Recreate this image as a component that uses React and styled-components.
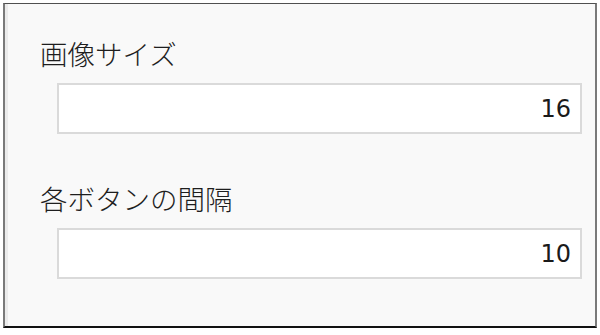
import React from 'react';
import styled, { createGlobalStyle } from 'styled-components';

const GlobalStyle = createGlobalStyle`
  html, body {
    margin: 0;
    padding: 0;
    background: #ffffff;
  }
`;

const Frame = styled.div`
  box-sizing: border-box;
  margin: 3px 0 0 3px;
  width: 594px;
  height: 325px;
  border-top: 1px solid #505050;
  border-left: 2px solid #7a7a7a;
  border-right: 2px solid #7a7a7a;
  border-bottom: 2px solid #111111;
  background: #f9f9f9;
  box-shadow: inset 3px 0 0 #ebebeb;
  padding: 35px 13px 0 35px;
  display: flex;
  flex-direction: column;
  gap: 50px;
`;

const Field = styled.div`
  display: flex;
  flex-direction: column;
  gap: 16px;
`;

const Label = styled.div`
  font-family: "Noto Sans CJK JP", "Noto Sans", sans-serif;
  font-size: 27.5px;
  font-weight: 300;
  line-height: 28px;
  color: #1e1e1e;
`;

const NumberBox = styled.input`
  box-sizing: border-box;
  margin-left: 17px;
  height: 51px;
  border: 2px solid #dadada;
  background: #ffffff;
  padding: 0 9px 0 8px;
  text-align: right;
  font-family: "DejaVu Sans", sans-serif;
  font-size: 24px;
  font-weight: 400;
  color: #1a1a1a;
  outline: none;
`;

export default function App() {
  return (
    <>
      <GlobalStyle />
      <Frame>
        <Field>
          <Label>画像サイズ</Label>
          <NumberBox defaultValue="16" readOnly />
        </Field>
        <Field>
          <Label>各ボタンの間隔</Label>
          <NumberBox defaultValue="10" readOnly />
        </Field>
      </Frame>
    </>
  );
}
